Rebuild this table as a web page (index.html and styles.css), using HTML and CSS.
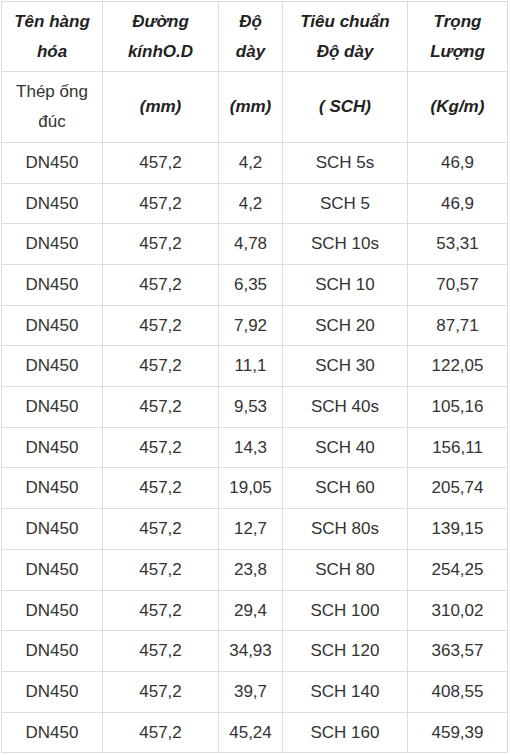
FILE: index.html
```html
<!DOCTYPE html>
<html lang="vi">
<head>
<meta charset="utf-8">
<link rel="stylesheet" href="styles.css">
</head>
<body>
<table class="spec">
<colgroup>
<col class="c1"><col class="c2"><col class="c3"><col class="c4"><col class="c5">
</colgroup>
<thead>
<tr><th>Tên hàng hóa</th><th>Đường kínhO.D</th><th>Độ dày</th><th>Tiêu chuẩn Độ dày</th><th>Trọng Lượng</th></tr>
</thead>
<tbody>
<tr class="units"><td class="name">Thép ống đúc</td><td>(mm)</td><td>(mm)</td><td>( SCH)</td><td>(Kg/m)</td></tr>
<tr><td>DN450</td><td>457,2</td><td>4,2</td><td>SCH 5s</td><td>46,9</td></tr>
<tr><td>DN450</td><td>457,2</td><td>4,2</td><td>SCH 5</td><td>46,9</td></tr>
<tr><td>DN450</td><td>457,2</td><td>4,78</td><td>SCH 10s</td><td>53,31</td></tr>
<tr><td>DN450</td><td>457,2</td><td>6,35</td><td>SCH 10</td><td>70,57</td></tr>
<tr><td>DN450</td><td>457,2</td><td>7,92</td><td>SCH 20</td><td>87,71</td></tr>
<tr><td>DN450</td><td>457,2</td><td>11,1</td><td>SCH 30</td><td>122,05</td></tr>
<tr><td>DN450</td><td>457,2</td><td>9,53</td><td>SCH 40s</td><td>105,16</td></tr>
<tr><td>DN450</td><td>457,2</td><td>14,3</td><td>SCH 40</td><td>156,11</td></tr>
<tr><td>DN450</td><td>457,2</td><td>19,05</td><td>SCH 60</td><td>205,74</td></tr>
<tr><td>DN450</td><td>457,2</td><td>12,7</td><td>SCH 80s</td><td>139,15</td></tr>
<tr><td>DN450</td><td>457,2</td><td>23,8</td><td>SCH 80</td><td>254,25</td></tr>
<tr><td>DN450</td><td>457,2</td><td>29,4</td><td>SCH 100</td><td>310,02</td></tr>
<tr><td>DN450</td><td>457,2</td><td>34,93</td><td>SCH 120</td><td>363,57</td></tr>
<tr><td>DN450</td><td>457,2</td><td>39,7</td><td>SCH 140</td><td>408,55</td></tr>
<tr><td>DN450</td><td>457,2</td><td>45,24</td><td>SCH 160</td><td>459,39</td></tr>
</tbody>
</table>
</body>
</html>
```
FILE: styles.css
```css
html, body {
  margin: 0;
  padding: 0;
  background: #fff;
}
.spec {
  margin: 1px 0 0 1px;
  width: 507px;
  table-layout: fixed;
  border-collapse: collapse;
  font-family: "Liberation Sans", Arial, sans-serif;
  font-size: 17px;
  color: #333;
}
.c1 { width: 101px; }
.c2 { width: 116px; }
.c3 { width: 64px; }
.c4 { width: 125px; }
.c5 { width: 100px; }
.spec th,
.spec td {
  border: 1px solid #ddd;
  padding: 5px 8px;
  line-height: 29.7px;
  text-align: center;
  vertical-align: middle;
}
.spec th {
  font-weight: bold;
  font-style: italic;
  color: #222;
}
.units td {
  font-weight: bold;
  font-style: italic;
  color: #222;
}
.units td.name {
  font-weight: normal;
  font-style: normal;
  color: #333;
}
```
